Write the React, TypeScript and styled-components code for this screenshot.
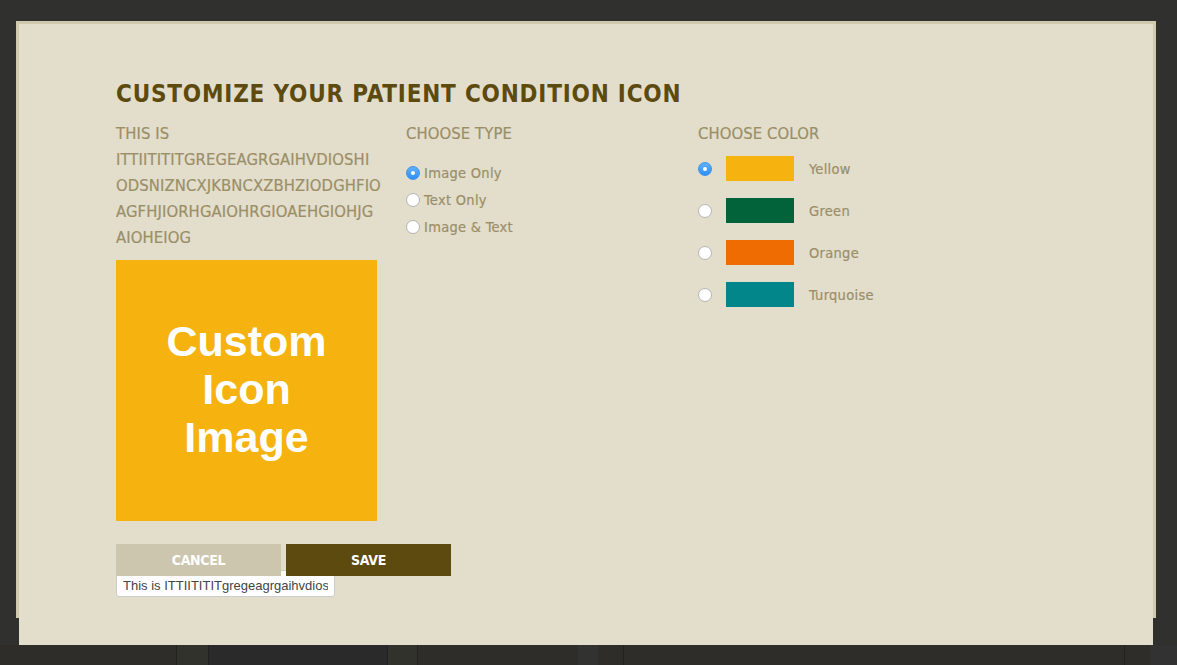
import React from "react";
import styled, { createGlobalStyle } from "styled-components";

const GlobalStyle = createGlobalStyle`
  html, body { margin: 0; padding: 0; }
  body {
    background: #30302e;
    width: 1177px;
    height: 665px;
    overflow: hidden;
    font-family: "Liberation Sans", Arial, sans-serif;
  }
`;

const COND = `"DejaVu Sans Condensed", "Liberation Sans Narrow", "Roboto", sans-serif`;

const Page = styled.div`
  display: flex;
  flex-direction: column;
  width: 1177px;
  height: 665px;
  padding-top: 21px;
  box-sizing: border-box;
`;

const Stage = styled.div`
  position: relative;
  height: 624px;
`;

const BackPanel = styled.div`
  margin-left: 19px;
  width: 1134px;
  height: 624px;
  background: #e3ddcc;
`;

const Modal = styled.div`
  position: absolute;
  left: 16px;
  top: 0;
  width: 1140px;
  height: 597px;
  box-sizing: border-box;
  border: 3px solid #cfc9ae;
  border-bottom: none;
  background: #e3ddcc;
  padding: 52px 0 0 97px;
`;

const Title = styled.h1`
  margin: 0;
  font-family: ${COND};
  font-weight: 700;
  font-size: 24px;
  line-height: 36px;
  letter-spacing: 0.8px;
  color: #5c4a0f;
  text-transform: uppercase;
`;

const Columns = styled.div`
  display: grid;
  grid-template-columns: 290px 292px 1fr;
  margin-top: 9px;
`;

const Column = styled.div`
  display: flex;
  flex-direction: column;
`;

const Label = styled.div`
  font-family: ${COND};
  font-size: 16.5px;
  line-height: 26px;
  color: #9b8f67;
  text-transform: uppercase;
  letter-spacing: 0.1px;
  -webkit-text-stroke: 0.2px #9b8f67;
`;

const IconBox = styled.div<{ $color: string }>`
  margin-top: 9px;
  width: 261px;
  height: 261px;
  background: ${(p) => p.$color};
  display: flex;
  align-items: center;
  justify-content: center;
  text-align: center;
  color: #ffffff;
  font-family: "Liberation Sans", Arial, sans-serif;
  font-weight: 700;
  font-size: 43px;
  line-height: 48px;
  padding-bottom: 4px;
  box-sizing: border-box;
`;

const ButtonRow = styled.div`
  display: flex;
  gap: 5px;
  margin-top: 23px;
  position: relative;
  z-index: 1;
`;

const Button = styled.button<{ $primary?: boolean }>`
  flex: none;
  width: 165px;
  height: 32px;
  border: none;
  padding: 0;
  background: ${(p) => (p.$primary ? "#5c4a0f" : "#ccc6ae")};
  color: #ffffff;
  font-family: ${COND};
  font-weight: 700;
  font-size: 14px;
  text-transform: uppercase;
  letter-spacing: -0.3px;
`;

const TextInput = styled.input`
  margin-top: -6px;
  width: 219px;
  height: 27px;
  box-sizing: border-box;
  border: 1px solid #cdcdcd;
  border-radius: 3px;
  background: #ffffff;
  padding: 3px 6px 0;
  font-family: "Liberation Sans", Arial, sans-serif;
  font-size: 13px;
  color: #444444;
  outline: none;
`;

const OptionList = styled.div<{ $gap: number; $top: number }>`
  display: flex;
  flex-direction: column;
  gap: ${(p) => p.$gap}px;
  margin-top: ${(p) => p.$top}px;
`;

const Option = styled.label<{ $gap: number }>`
  display: flex;
  align-items: center;
  gap: ${(p) => p.$gap}px;
  font-family: ${COND};
  font-size: 14.5px;
  color: #9b8f67;
  letter-spacing: 0.3px;
  -webkit-text-stroke: 0.2px #9b8f67;
`;

const Radio = styled.span<{ $checked?: boolean }>`
  position: relative;
  flex: none;
  width: 14px;
  height: 14px;
  border-radius: 50%;
  box-sizing: border-box;
  background: ${(p) =>
    p.$checked ? "linear-gradient(#5fb1fb, #2f8ff6)" : "#ffffff"};
  border: 1px solid ${(p) => (p.$checked ? "#3a92f0" : "#b4b4b4")};
  &::after {
    content: "";
    display: ${(p) => (p.$checked ? "block" : "none")};
    position: absolute;
    left: 50%;
    top: 50%;
    width: 4px;
    height: 4px;
    margin: -2px 0 0 -2px;
    border-radius: 50%;
    background: #ffffff;
  }
`;

const Swatch = styled.span<{ $color: string }>`
  width: 68px;
  height: 25px;
  background: ${(p) => p.$color};
  flex: none;
`;

const ColorName = styled.span`
  margin-left: 1px;
`;

const BottomStrip = styled.div`
  display: flex;
  height: 20px;
`;

const Segment = styled.div<{ $w: number; $bg: string; $line?: boolean }>`
  width: ${(p) => p.$w}px;
  flex: none;
  background: ${(p) => p.$bg};
  box-sizing: border-box;
  border-left: ${(p) => (p.$line ? "1px solid #222220" : "none")};
`;

const descLines = [
  "This is",
  "ITTIITITITgregeagrgaihvdioshi",
  "odsnizncxjkbncxzbhziodghfio",
  "agfhjiorhgaiohrgioaehgiohjg",
  "aioheiog",
];

const types = ["Image Only", "Text Only", "Image & Text"];
const colors = [
  { name: "Yellow", value: "#f6b20f" },
  { name: "Green", value: "#02623a" },
  { name: "Orange", value: "#ee6c02" },
  { name: "Turquoise", value: "#02868a" },
];

const segments = [
  { w: 176, bg: "#2e2d29" },
  { w: 32, bg: "#30322b", line: true },
  { w: 179, bg: "#2a2a2a", line: true },
  { w: 30, bg: "#30322b", line: true },
  { w: 161, bg: "#2e2d29", line: true },
  { w: 20, bg: "#323230" },
  { w: 25, bg: "#2e2d29" },
  { w: 501, bg: "#2e2d29", line: true },
  { w: 26, bg: "#2e2d29", line: true },
  { w: 27, bg: "#323232" },
];

export default function App() {
  return (
    <>
      <GlobalStyle />
      <Page>
        <Stage>
          <BackPanel />
          <Modal>
            <Title>Customize your patient condition icon</Title>
            <Columns>
              <Column>
                <Label>
                  {descLines.map((l, i) => (
                    <React.Fragment key={i}>
                      {l}
                      {i < descLines.length - 1 && <br />}
                    </React.Fragment>
                  ))}
                </Label>
                <IconBox $color="#f6b20f">
                  Custom
                  <br />
                  Icon
                  <br />
                  Image
                </IconBox>
                <ButtonRow>
                  <Button>Cancel</Button>
                  <Button $primary>Save</Button>
                </ButtonRow>
                <TextInput
                  readOnly
                  value="This is ITTIITITITgregeagrgaihvdioshiodsnizncxjkbncxzbhziodghfio"
                />
              </Column>
              <Column>
                <Label>Choose Type</Label>
                <OptionList $gap={11} $top={18}>
                  {types.map((t, i) => (
                    <Option key={t} $gap={4}>
                      <Radio $checked={i === 0} />
                      {t}
                    </Option>
                  ))}
                </OptionList>
              </Column>
              <Column>
                <Label>Choose Color</Label>
                <OptionList $gap={17} $top={9}>
                  {colors.map((c, i) => (
                    <Option key={c.name} $gap={14}>
                      <Radio $checked={i === 0} />
                      <Swatch $color={c.value} />
                      <ColorName>{c.name}</ColorName>
                    </Option>
                  ))}
                </OptionList>
              </Column>
            </Columns>
          </Modal>
        </Stage>
        <BottomStrip>
          {segments.map((s, i) => (
            <Segment key={i} $w={s.w} $bg={s.bg} $line={s.line} />
          ))}
        </BottomStrip>
      </Page>
    </>
  );
}
